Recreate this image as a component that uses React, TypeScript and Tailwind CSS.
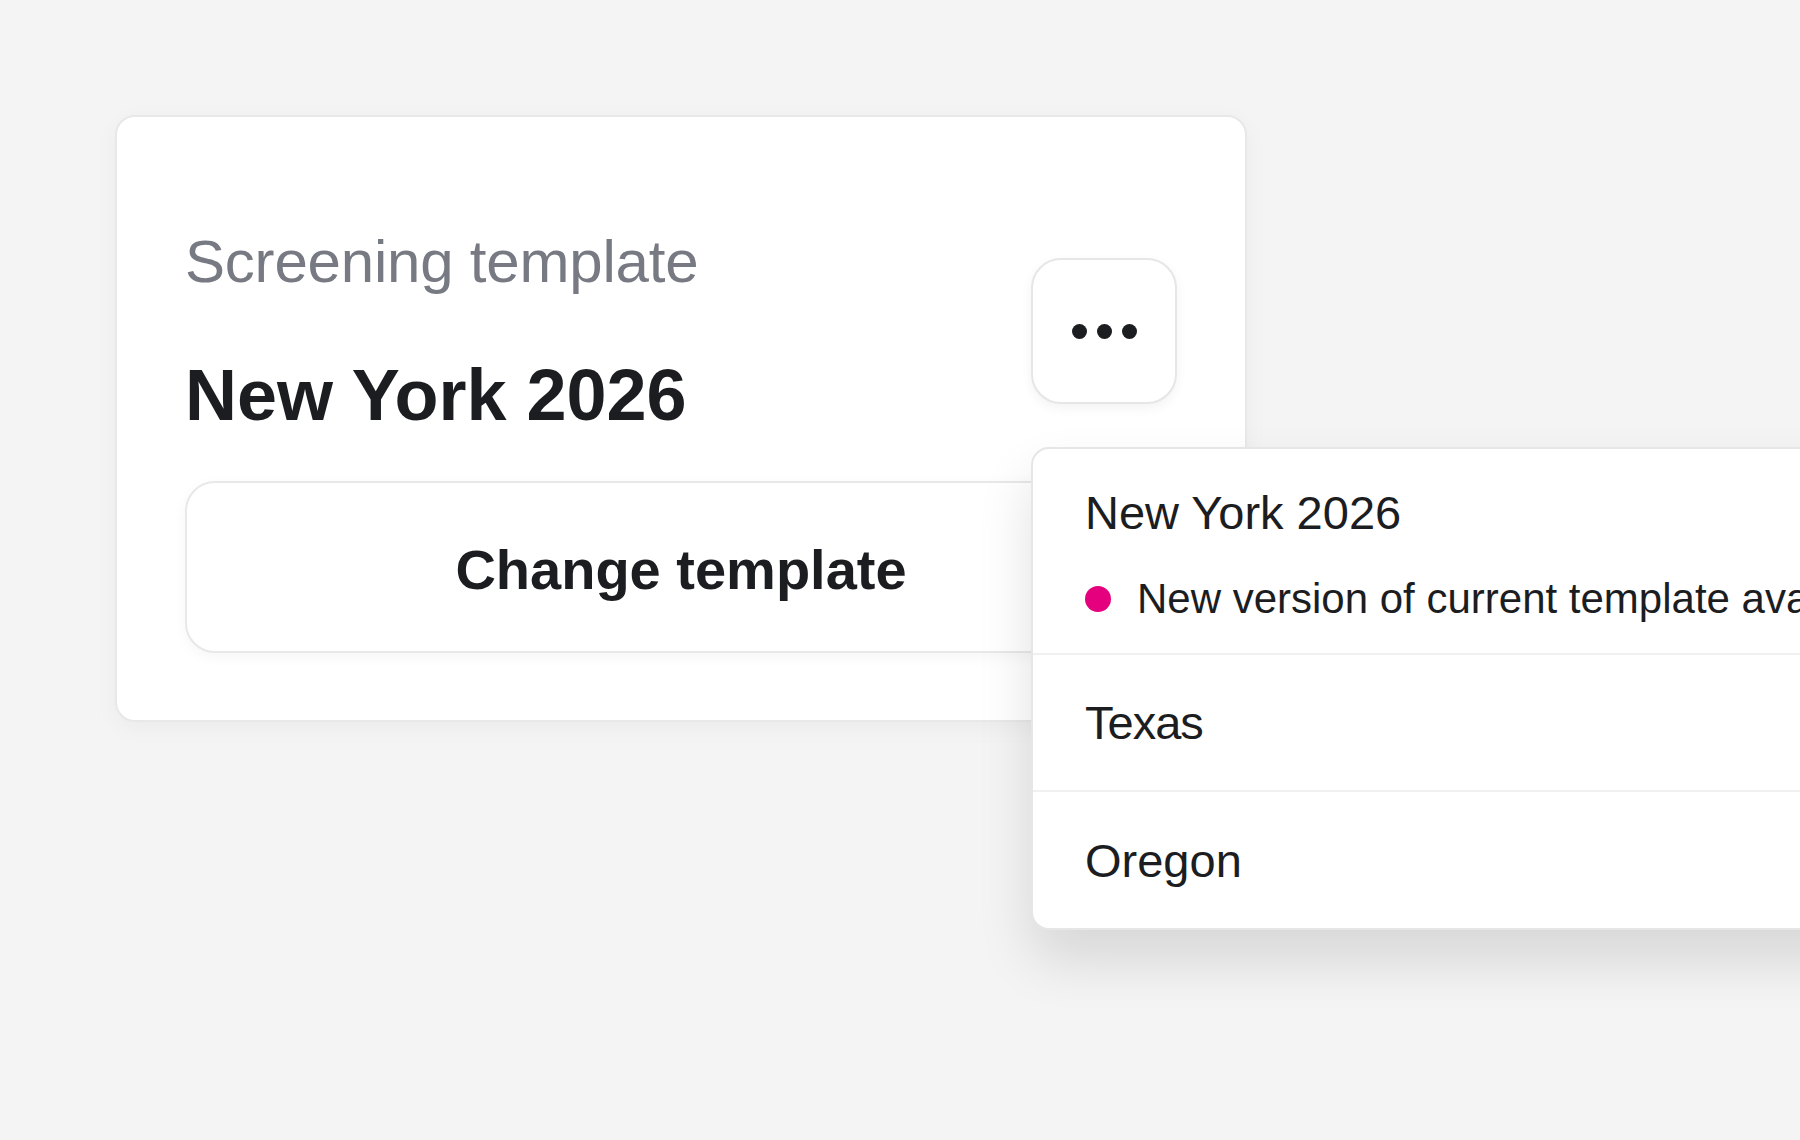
import React from "react";

export default function App() {
  return (
    <div
      className="relative w-[1800px] h-[1140px] overflow-hidden bg-[#f4f4f4] pt-[115px] pl-[115px]"
      style={{ fontFamily: '"Liberation Sans", Arial, sans-serif' }}
    >
      {/* Main card */}
      <div className="w-[1132px] rounded-[20px] border-2 border-[#e8e8e8] bg-white px-[68px] pt-[115px] pb-[67px] shadow-[0_6px_24px_rgba(0,0,0,0.04)]">
        <div className="flex items-start justify-between">
          <div className="flex flex-col">
            <div className="text-[60px] leading-[60px] text-[#777a82] tracking-[-0.2px]">
              Screening template
            </div>
            <div className="mt-[67px] text-[72px] leading-[72px] font-bold text-[#1c1d21]">
              New York 2026
            </div>
          </div>
          <button className="mt-[26px] flex h-[146px] w-[146px] items-center justify-center gap-[10px] rounded-[30px] border-2 border-[#e6e6e6] bg-white shadow-[0_4px_12px_rgba(0,0,0,0.05)]">
            <span className="h-[15px] w-[15px] rounded-full bg-[#1c1d21]" />
            <span className="h-[15px] w-[15px] rounded-full bg-[#1c1d21]" />
            <span className="h-[15px] w-[15px] rounded-full bg-[#1c1d21]" />
          </button>
        </div>
        <button className="mt-[50px] flex h-[172px] w-full items-center justify-center rounded-[30px] border-2 border-[#e8e8e8] bg-white shadow-[0_4px_14px_rgba(0,0,0,0.04)]">
          <span className="text-[56px] leading-[56px] font-bold text-[#1c1d21] mt-[6px]">
            Change template
          </span>
        </button>
      </div>

      {/* Dropdown menu */}
      <div className="absolute left-[1031px] top-[447px] w-[900px] rounded-[18px] border-2 border-[#e6e6e6] bg-white shadow-[0_30px_55px_rgba(0,0,0,0.12)]">
        <div className="h-[206px] border-b-2 border-[#f0f0f0] pl-[52px] pt-[40px]">
          <div className="text-[47px] leading-[47px] text-[#1c1d21]">New York 2026</div>
          <div className="mt-[42px] flex items-center gap-[26px]">
            <span className="h-[26px] w-[26px] shrink-0 rounded-full bg-[#e5007d]" />
            <span className="whitespace-nowrap text-[42px] leading-[42px] text-[#1c1d21]">
              New version of current template available
            </span>
          </div>
        </div>
        <div className="flex h-[137px] items-center border-b-2 border-[#f0f0f0] pl-[52px]">
          <span className="text-[47px] leading-[47px] tracking-[-1px] text-[#1c1d21]">Texas</span>
        </div>
        <div className="flex h-[136px] items-center pl-[52px]">
          <span className="text-[47px] leading-[47px] text-[#1c1d21]">Oregon</span>
        </div>
      </div>
    </div>
  );
}
